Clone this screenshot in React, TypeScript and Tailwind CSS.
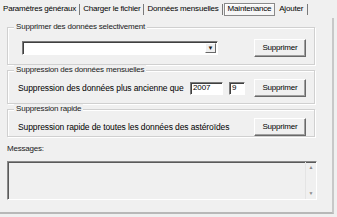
import React from 'react';

const font = { fontFamily: '"Liberation Sans", Arial, sans-serif' };

function Button() {
    return (
        <button className="flex h-[18px] w-[52px] items-center justify-center border border-t-white border-l-white border-r-[#696969] border-b-[#696969] bg-[#f0f0f0] text-[8px] tracking-[-0.2px] text-black shadow-[inset_-1px_-1px_0_#a0a0a0]">
            Supprimer
        </button>
    );
}

function Group({
    label,
    className,
    children,
}: {
    label: string;
    className: string;
    children: React.ReactNode;
}) {
    return (
        <div
            className={`relative w-[308px] border border-[#d0d0d0] shadow-[inset_1px_1px_0_#ffffff,1px_1px_0_#ffffff] ${className}`}
        >
            <span className="absolute -top-[6px] left-[6px] bg-[#f0f0f0] px-[2px] text-[8px] leading-[10px] tracking-[-0.2px] text-[#1a1a1a]">
                {label}
            </span>
            {children}
        </div>
    );
}

export default function App() {
    const tabs = ['Paramètres généraux', 'Charger le fichier', 'Données mensuelles'];

    return (
        <div
            className="h-[217px] w-[337px] overflow-hidden bg-[#f0f0f0] text-black"
            style={font}
        >
            {/* Tabs */}
            <div className="flex h-[18px] items-center pl-[3px] text-[8px] tracking-[-0.2px]">
                {tabs.map((t) => (
                    <span key={t} className="flex items-center">
                        <span>{t}</span>
                        <span className="mx-[3px] h-[11px] w-px bg-[#7a7a7a]" />
                    </span>
                ))}
                <span className="ml-[-2px] flex h-[13px] items-center border border-[#8a8a8a] bg-white/40 px-[3px] shadow-[inset_1px_1px_0_#ffffff]">
                    Maintenance
                </span>
                <span className="mx-[4px]">Ajouter</span>
                <span className="h-[11px] w-px bg-[#7a7a7a]" />
            </div>

            {/* Tab page */}
            <div className="h-[196px] w-[334px] border-r-2 border-b-2 border-r-[#c8c8c8] border-b-[#b8b8b8] pt-[9px] pl-[7px]">
                <Group label="Supprimer des données selectivement" className="h-[38px]">
                    <div className="flex h-full items-center pt-[4px] pl-[14px]">
                        <div className="flex h-[14px] w-[196px] items-center justify-end border border-t-[#7a7a7a] border-l-[#7a7a7a] border-r-white border-b-white bg-white shadow-[inset_1px_1px_0_#404040]">
                            <span className="mr-[1px] flex h-[10px] w-[11px] items-center justify-center border border-t-white border-l-white border-r-[#696969] border-b-[#696969] bg-[#f0f0f0] text-[6px] leading-none text-[#202020]">
                                ▼
                            </span>
                        </div>
                        <div className="ml-[36px]">
                            <Button />
                        </div>
                    </div>
                </Group>

                <Group label="Suppression des données mensuelles" className="mt-[5px] h-[34px]">
                    <div className="flex h-full items-center pt-[2px] pl-[10px] text-[8.5px] tracking-[-0.1px]">
                        <span className="w-[172px]">Suppression des données plus ancienne que</span>
                        <div className="flex h-[13px] w-[33px] items-center border border-t-[#7a7a7a] border-l-[#7a7a7a] border-r-white border-b-white bg-white pl-[2px] text-[8px] shadow-[inset_1px_1px_0_#404040]">
                            2007
                        </div>
                        <div className="ml-[6px] flex h-[13px] w-[16px] items-center border border-t-[#7a7a7a] border-l-[#7a7a7a] border-r-white border-b-white bg-white pl-[2px] text-[8px] shadow-[inset_1px_1px_0_#404040]">
                            9
                        </div>
                        <div className="ml-[9px]">
                            <Button />
                        </div>
                    </div>
                </Group>

                <Group label="Suppression rapide" className="mt-[5px] h-[28px]">
                    <div className="flex h-full items-center pt-[8px] pl-[10px] text-[8.5px] tracking-[-0.1px]">
                        <span className="w-[236px]">Suppression rapide de toutes les données des astéroïdes</span>
                        <Button />
                    </div>
                </Group>

                <div className="mt-[7px] text-[8px] leading-[10px] tracking-[-0.2px] text-[#1a1a1a]">Messages:</div>

                <div className="mt-[7px] flex h-[39px] w-[310px] border border-t-[#8a8a8a] border-l-[#8a8a8a] border-r-white border-b-white bg-[#f0f0f0] shadow-[inset_1px_1px_0_#5a5a5a]">
                    <div className="flex-1" />
                    <div className="flex w-[11px] flex-col items-center justify-between border-l border-[#e4e4e4] py-[3px] text-[5px] leading-none text-[#8a8a8a]">
                        <span>▲</span>
                        <span>▼</span>
                    </div>
                </div>
            </div>
        </div>
    );
}
